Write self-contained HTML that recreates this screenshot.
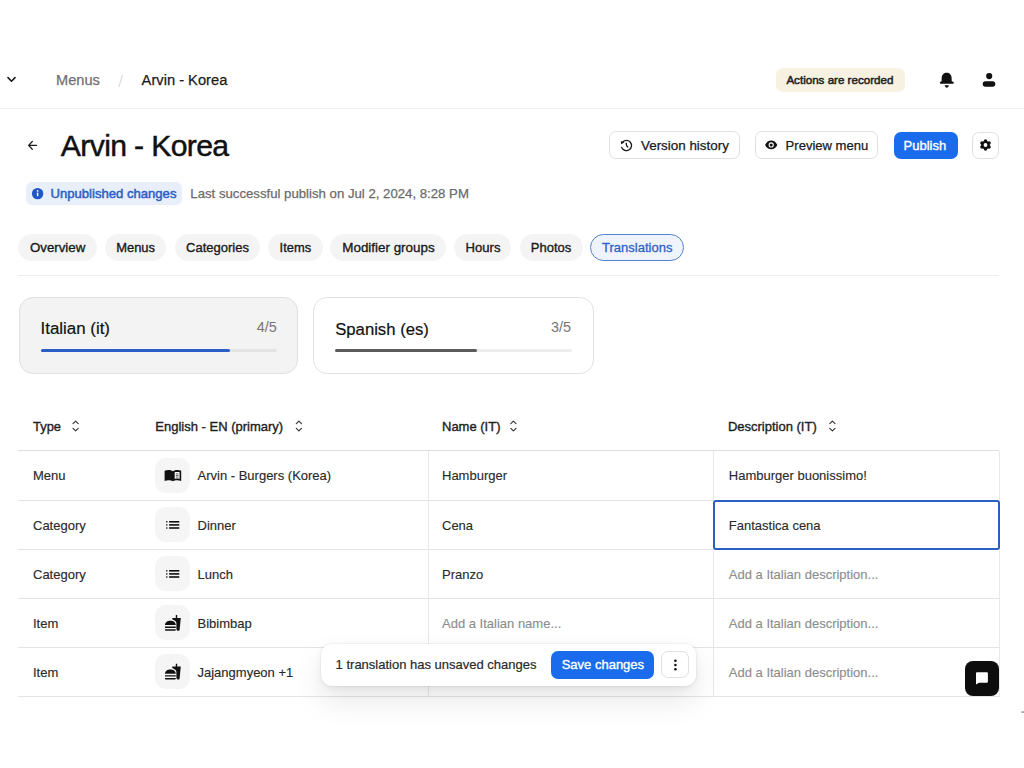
<!DOCTYPE html>
<html><head><meta charset="utf-8"><style>
html,body{margin:0;padding:0;background:#fff;width:1024px;height:768px;overflow:hidden;}
body{position:relative;font-family:"Liberation Sans",sans-serif;}
.t{position:absolute;white-space:nowrap;}
.r{position:absolute;}
</style></head><body>
<div class="t" style="left:56px;top:71px;font-size:14.6px;line-height:18px;color:#707070;font-weight:400;-webkit-text-stroke:0.25px #707070;">Menus</div>
<div class="t" style="left:141.6px;top:71px;font-size:14.7px;line-height:18px;color:#1a1a1a;font-weight:400;-webkit-text-stroke:0.25px #1a1a1a;">Arvin - Korea</div>
<div class="r" style="left:776px;top:67.5px;width:129.00px;height:24.50px;background:#f7f1e2;border-radius:7px;"></div>
<div class="t" style="left:786.4px;top:73px;font-size:11.6px;line-height:14px;color:#222;font-weight:400;-webkit-text-stroke:0.5px #222;">Actions are recorded</div>
<div class="r" style="left:0px;top:107.5px;width:1024.00px;height:1.50px;background:#efefef;"></div>
<div class="t" style="left:60.8px;top:128px;font-size:30.2px;line-height:36px;color:#111;font-weight:400;-webkit-text-stroke:0.45px #111;letter-spacing:-0.65px;">Arvin - Korea</div>
<div class="r" style="left:609px;top:131.4px;width:131.00px;height:27.80px;border:1px solid #dfdfdf;border-radius:7px;box-sizing:border-box;background:#fff;"></div>
<div class="t" style="left:641px;top:138px;font-size:13.4px;line-height:16px;color:#1a1a1a;font-weight:400;-webkit-text-stroke:0.25px #1a1a1a;">Version history</div>
<div class="r" style="left:754.5px;top:131.4px;width:123.70px;height:27.80px;border:1px solid #dfdfdf;border-radius:7px;box-sizing:border-box;background:#fff;"></div>
<div class="t" style="left:785.6px;top:138px;font-size:13.05px;line-height:16px;color:#1a1a1a;font-weight:400;-webkit-text-stroke:0.25px #1a1a1a;">Preview menu</div>
<div class="r" style="left:893.5px;top:132px;width:64.00px;height:27.00px;background:#1a6cec;border-radius:7px;"></div>
<div class="t" style="left:903.6px;top:138px;font-size:13.0px;line-height:16px;color:#fff;font-weight:400;-webkit-text-stroke:0.35px #fff;">Publish</div>
<div class="r" style="left:971.7px;top:132px;width:27.30px;height:27.00px;border:1px solid #dfdfdf;border-radius:7px;box-sizing:border-box;background:#fff;"></div>
<div class="r" style="left:25.6px;top:182px;width:156.90px;height:23.00px;background:#e8effb;border-radius:6px;"></div>
<div class="t" style="left:50.5px;top:186px;font-size:13.1px;line-height:16px;color:#2d5fc2;font-weight:400;-webkit-text-stroke:0.5px #2d5fc2;">Unpublished changes</div>
<div class="t" style="left:190.3px;top:186px;font-size:13.2px;line-height:16px;color:#6b6b6b;font-weight:400;-webkit-text-stroke:0.25px #6b6b6b;">Last successful publish on Jul 2, 2024, 8:28 PM</div>
<div class="r" style="left:18.3px;top:233.5px;width:78.70px;height:27.50px;background:#f4f4f4;border-radius:14px;"></div>
<div class="t" style="left:29.9px;top:240px;font-size:13.3px;line-height:16px;color:#1a1a1a;font-weight:400;-webkit-text-stroke:0.35px #1a1a1a;">Overview</div>
<div class="r" style="left:105.3px;top:233.5px;width:60.70px;height:27.50px;background:#f4f4f4;border-radius:14px;"></div>
<div class="t" style="left:116.2px;top:240px;font-size:12.95px;line-height:16px;color:#1a1a1a;font-weight:400;-webkit-text-stroke:0.35px #1a1a1a;">Menus</div>
<div class="r" style="left:175px;top:233.5px;width:84.70px;height:27.50px;background:#f4f4f4;border-radius:14px;"></div>
<div class="t" style="left:186px;top:240px;font-size:13.03px;line-height:16px;color:#1a1a1a;font-weight:400;-webkit-text-stroke:0.35px #1a1a1a;">Categories</div>
<div class="r" style="left:268.3px;top:233.5px;width:54.40px;height:27.50px;background:#f4f4f4;border-radius:14px;"></div>
<div class="t" style="left:279.6px;top:240px;font-size:12.9px;line-height:15px;color:#1a1a1a;font-weight:400;-webkit-text-stroke:0.35px #1a1a1a;">Items</div>
<div class="r" style="left:330.4px;top:233.5px;width:115.80px;height:27.50px;background:#f4f4f4;border-radius:14px;"></div>
<div class="t" style="left:342.3px;top:240px;font-size:13.4px;line-height:16px;color:#1a1a1a;font-weight:400;-webkit-text-stroke:0.35px #1a1a1a;">Modifier groups</div>
<div class="r" style="left:454.3px;top:233.5px;width:56.70px;height:27.50px;background:#f4f4f4;border-radius:14px;"></div>
<div class="t" style="left:465.5px;top:240px;font-size:13.1px;line-height:16px;color:#1a1a1a;font-weight:400;-webkit-text-stroke:0.35px #1a1a1a;">Hours</div>
<div class="r" style="left:519.6px;top:233.5px;width:63.10px;height:27.50px;background:#f4f4f4;border-radius:14px;"></div>
<div class="t" style="left:530.8px;top:240px;font-size:13.0px;line-height:16px;color:#1a1a1a;font-weight:400;-webkit-text-stroke:0.35px #1a1a1a;">Photos</div>
<div class="r" style="left:589.8px;top:233.5px;width:94.60px;height:27.50px;background:#eef3fc;border:1px solid #5281d3;border-radius:14px;box-sizing:border-box;"></div>
<div class="t" style="left:602px;top:240px;font-size:13.03px;line-height:16px;color:#2c63c6;font-weight:400;-webkit-text-stroke:0.3px #2c63c6;">Translations</div>
<div class="r" style="left:18px;top:274.8px;width:981.00px;height:1.50px;background:#eeeeee;"></div>
<div class="r" style="left:18.5px;top:297px;width:279.90px;height:77.20px;background:#f3f3f3;border:1px solid #e0e0e0;border-radius:14px;box-sizing:border-box;"></div>
<div class="t" style="left:40.5px;top:319px;font-size:16.9px;line-height:20px;color:#111;font-weight:400;-webkit-text-stroke:0.2px #111;">Italian (it)</div>
<div class="t" style="left:256.7px;top:319px;font-size:14.4px;line-height:17px;color:#767676;font-weight:400;">4/5</div>
<div class="r" style="left:40.5px;top:348.6px;width:236.50px;height:3.70px;background:#e3e3e3;border-radius:2px;"></div>
<div class="r" style="left:40.5px;top:348.6px;width:189.10px;height:3.70px;background:#2b5ec4;border-radius:2px;"></div>
<div class="r" style="left:313.2px;top:297px;width:280.40px;height:77.20px;background:#fff;border:1px solid #e2e2e2;border-radius:14px;box-sizing:border-box;"></div>
<div class="t" style="left:335.2px;top:320px;font-size:16.7px;line-height:20px;color:#111;font-weight:400;-webkit-text-stroke:0.2px #111;">Spanish (es)</div>
<div class="t" style="left:551px;top:319px;font-size:14.4px;line-height:17px;color:#767676;font-weight:400;">3/5</div>
<div class="r" style="left:335.2px;top:348.6px;width:236.40px;height:3.70px;background:#ededed;border-radius:2px;"></div>
<div class="r" style="left:335.2px;top:348.6px;width:141.80px;height:3.70px;background:#5c5c5c;border-radius:2px;"></div>
<div class="t" style="left:33.1px;top:419px;font-size:12.9px;line-height:15px;color:#1f1f1f;font-weight:400;-webkit-text-stroke:0.38px #1f1f1f;">Type</div>
<div class="t" style="left:155.3px;top:419px;font-size:13.0px;line-height:16px;color:#1f1f1f;font-weight:400;-webkit-text-stroke:0.38px #1f1f1f;">English - EN (primary)</div>
<div class="t" style="left:442px;top:419px;font-size:13.0px;line-height:16px;color:#1f1f1f;font-weight:400;-webkit-text-stroke:0.38px #1f1f1f;">Name (IT)</div>
<div class="t" style="left:727.9px;top:419px;font-size:13.0px;line-height:16px;color:#1f1f1f;font-weight:400;-webkit-text-stroke:0.38px #1f1f1f;">Description (IT)</div>
<div class="r" style="left:18px;top:450px;width:981.00px;height:1.00px;background:#dedede;"></div>
<div class="t" style="left:33.0px;top:468px;font-size:13.0px;line-height:16px;color:#2a2a2a;font-weight:400;-webkit-text-stroke:0.15px #2a2a2a;">Menu</div>
<div class="r" style="left:155.3px;top:457.8px;width:34.80px;height:35.00px;background:#f5f5f5;border-radius:11px;"></div>
<div class="t" style="left:197.5px;top:468px;font-size:13.0px;line-height:16px;color:#2a2a2a;font-weight:400;-webkit-text-stroke:0.15px #2a2a2a;">Arvin - Burgers (Korea)</div>
<div class="t" style="left:442px;top:468px;font-size:13.0px;line-height:16px;color:#2a2a2a;font-weight:400;-webkit-text-stroke:0.12px #2a2a2a;">Hamburger</div>
<div class="t" style="left:728.8px;top:468px;font-size:13.0px;line-height:16px;color:#2a2a2a;font-weight:400;-webkit-text-stroke:0.12px #2a2a2a;">Hamburger buonissimo!</div>
<div class="r" style="left:18px;top:499.9px;width:981.00px;height:1.00px;background:#e4e4e4;"></div>
<div class="t" style="left:33.0px;top:518px;font-size:13.0px;line-height:16px;color:#2a2a2a;font-weight:400;-webkit-text-stroke:0.15px #2a2a2a;">Category</div>
<div class="r" style="left:155.3px;top:507.2px;width:34.80px;height:35.00px;background:#f5f5f5;border-radius:11px;"></div>
<div class="t" style="left:197.5px;top:518px;font-size:13.0px;line-height:16px;color:#2a2a2a;font-weight:400;-webkit-text-stroke:0.15px #2a2a2a;">Dinner</div>
<div class="t" style="left:442px;top:518px;font-size:13.0px;line-height:16px;color:#2a2a2a;font-weight:400;-webkit-text-stroke:0.12px #2a2a2a;">Cena</div>
<div class="t" style="left:728.8px;top:518px;font-size:13.0px;line-height:16px;color:#2a2a2a;font-weight:400;-webkit-text-stroke:0.12px #2a2a2a;">Fantastica cena</div>
<div class="r" style="left:18px;top:548.9px;width:981.00px;height:1.00px;background:#e4e4e4;"></div>
<div class="t" style="left:33.0px;top:567px;font-size:13.0px;line-height:16px;color:#2a2a2a;font-weight:400;-webkit-text-stroke:0.15px #2a2a2a;">Category</div>
<div class="r" style="left:155.3px;top:556.1999999999999px;width:34.80px;height:35.00px;background:#f5f5f5;border-radius:11px;"></div>
<div class="t" style="left:197.5px;top:567px;font-size:13.0px;line-height:16px;color:#2a2a2a;font-weight:400;-webkit-text-stroke:0.15px #2a2a2a;">Lunch</div>
<div class="t" style="left:442px;top:567px;font-size:13.0px;line-height:16px;color:#2a2a2a;font-weight:400;-webkit-text-stroke:0.12px #2a2a2a;">Pranzo</div>
<div class="t" style="left:728.8px;top:567px;font-size:13.0px;line-height:16px;color:#8c8c8c;font-weight:400;-webkit-text-stroke:0.12px #8c8c8c;">Add a Italian description...</div>
<div class="r" style="left:18px;top:598.1px;width:981.00px;height:1.00px;background:#e4e4e4;"></div>
<div class="t" style="left:33.0px;top:616px;font-size:13.0px;line-height:16px;color:#2a2a2a;font-weight:400;-webkit-text-stroke:0.15px #2a2a2a;">Item</div>
<div class="r" style="left:155.3px;top:605.4px;width:34.80px;height:35.00px;background:#f5f5f5;border-radius:11px;"></div>
<div class="t" style="left:197.5px;top:616px;font-size:13.0px;line-height:16px;color:#2a2a2a;font-weight:400;-webkit-text-stroke:0.15px #2a2a2a;">Bibimbap</div>
<div class="t" style="left:442px;top:616px;font-size:13.0px;line-height:16px;color:#8c8c8c;font-weight:400;-webkit-text-stroke:0.12px #8c8c8c;">Add a Italian name...</div>
<div class="t" style="left:728.8px;top:616px;font-size:13.0px;line-height:16px;color:#8c8c8c;font-weight:400;-webkit-text-stroke:0.12px #8c8c8c;">Add a Italian description...</div>
<div class="r" style="left:18px;top:646.8px;width:981.00px;height:1.00px;background:#e4e4e4;"></div>
<div class="t" style="left:33.0px;top:665px;font-size:13.0px;line-height:16px;color:#2a2a2a;font-weight:400;-webkit-text-stroke:0.15px #2a2a2a;">Item</div>
<div class="r" style="left:155.3px;top:654.0999999999999px;width:34.80px;height:35.00px;background:#f5f5f5;border-radius:11px;"></div>
<div class="t" style="left:197.5px;top:665px;font-size:13.0px;line-height:16px;color:#2a2a2a;font-weight:400;-webkit-text-stroke:0.15px #2a2a2a;">Jajangmyeon +1</div>
<div class="t" style="left:442px;top:665px;font-size:13.0px;line-height:16px;color:#8c8c8c;font-weight:400;-webkit-text-stroke:0.12px #8c8c8c;">Add a Italian name...</div>
<div class="t" style="left:728.8px;top:665px;font-size:13.0px;line-height:16px;color:#8c8c8c;font-weight:400;-webkit-text-stroke:0.12px #8c8c8c;">Add a Italian description...</div>
<div class="r" style="left:18px;top:695.8px;width:981.00px;height:1.00px;background:#e4e4e4;"></div>
<div class="r" style="left:427.6px;top:451px;width:1.00px;height:245.80px;background:#e8e8e8;"></div>
<div class="r" style="left:712.6px;top:451px;width:1.00px;height:245.80px;background:#e8e8e8;"></div>
<div class="r" style="left:998.6px;top:451px;width:1.00px;height:245.80px;background:#e8e8e8;"></div>
<div class="r" style="left:712.6px;top:500.2px;width:287.00px;height:49.70px;border:2px solid #2b5fc2;border-radius:3px;box-sizing:border-box;"></div>
<svg class="r" style="left:0;top:0;pointer-events:none" width="1024" height="768" viewBox="0 0 1024 768"><path d="M8 77.6 L11.5 81.2 L15 77.6" fill="none" stroke="#1a1a1a" stroke-width="1.6" stroke-linecap="round" stroke-linejoin="round"/><path d="M122.5 75 L118.8 87" stroke="#d9d9d9" stroke-width="1.1"/><path fill="#111" d="M939.8 82.8 C939.8 82 940.6 81.6 941.6 81.2 L941.7 77.8 C941.7 74.8 944 72.7 946.7 72.7 C949.4 72.7 951.6 74.8 951.6 77.8 L951.7 81.2 C952.7 81.6 953.9 82 953.9 82.8 C953.9 83.3 953.5 83.7 953 83.7 H940.7 C940.2 83.7 939.8 83.3 939.8 82.8 Z"/><path fill="#111" d="M944.6 85.3 H948.9 C948.6 86.9 947.7 87.7 946.75 87.7 C945.8 87.7 944.9 86.9 944.6 85.3 Z"/><circle cx="989.2" cy="76.1" r="3.1" fill="#111"/><rect x="982.7" y="81.2" width="12.6" height="5.5" rx="2.6" fill="#111"/><path d="M36.6 145.4 H29 M32.3 141.5 L28.6 145.4 L32.3 149.3" fill="none" stroke="#1a1a1a" stroke-width="1.25" stroke-linecap="round" stroke-linejoin="round"/><g fill="none" stroke="#1a1a1a" stroke-width="1.3" stroke-linecap="round"><path d="M622.3 142.5 A5.1 5.1 0 1 1 621.7 147.4"/><path d="M626.2 143.1 L626.6 145.8 L627.8 147"/></g><path fill="#1a1a1a" d="M620.9 140.9 L624.4 142.5 L621.1 144.3 Z"/><path fill="#111" d="M765.1 144.9 C766.6 142 768.7 140.6 771.2 140.6 C773.7 140.6 775.8 142 777.3 144.9 C775.8 147.8 773.7 149.2 771.2 149.2 C768.7 149.2 766.6 147.8 765.1 144.9 Z"/><circle cx="771.2" cy="144.9" r="2.6" fill="#fff"/><circle cx="771.2" cy="144.9" r="1.5" fill="#111"/><circle cx="985.50" cy="140.90" r="1.75" fill="#111"/><circle cx="989.05" cy="142.95" r="1.75" fill="#111"/><circle cx="989.05" cy="147.05" r="1.75" fill="#111"/><circle cx="985.50" cy="149.10" r="1.75" fill="#111"/><circle cx="981.95" cy="147.05" r="1.75" fill="#111"/><circle cx="981.95" cy="142.95" r="1.75" fill="#111"/><circle cx="985.5" cy="145.0" r="4.3" fill="#111"/><circle cx="985.5" cy="145.0" r="1.9" fill="#fff"/><circle cx="37.6" cy="193.6" r="5.7" fill="#1f56c8"/><rect x="36.9" y="192.6" width="1.4" height="3.6" fill="#fff"/><circle cx="37.6" cy="190.9" r="0.85" fill="#fff"/><path d="M73.0 423.7 L75.6 421.2 L78.2 423.7 M73.0 428.3 L75.6 430.8 L78.2 428.3" fill="none" stroke="#333" stroke-width="1.15" stroke-linecap="round" stroke-linejoin="round"/><path d="M296.3 423.7 L298.9 421.2 L301.5 423.7 M296.3 428.3 L298.9 430.8 L301.5 428.3" fill="none" stroke="#333" stroke-width="1.15" stroke-linecap="round" stroke-linejoin="round"/><path d="M510.8 423.7 L513.4 421.2 L516.0 423.7 M510.8 428.3 L513.4 430.8 L516.0 428.3" fill="none" stroke="#333" stroke-width="1.15" stroke-linecap="round" stroke-linejoin="round"/><path d="M829.8 423.7 L832.4 421.2 L835.0 423.7 M829.8 428.3 L832.4 430.8 L835.0 428.3" fill="none" stroke="#333" stroke-width="1.15" stroke-linecap="round" stroke-linejoin="round"/><path fill="#111" d="M164.6 470.8 C167 469.7 170.8 469.8 172.9 471.2 C175 469.8 178.8 469.7 181.2 470.8 V480.9 C178.8 479.9 175 479.9 172.9 481.2 C170.8 479.9 167 479.9 164.6 480.9 Z"/><path fill="#fff" d="M174.7 472.3 C176 471.8 178.2 471.8 179.6 472.3 V478.9 C178.2 478.5 176 478.5 174.7 479.1 Z"/><path d="M175.8 473.9 H178.6 M175.8 475.5 H178.6 M175.8 477.1 H178.6" stroke="#555" stroke-width="0.9"/><rect x="166.1" y="521.15" width="1.35" height="1.35" fill="#111"/><rect x="169.1" y="521.00" width="10.2" height="1.6" fill="#111"/><rect x="166.1" y="524.25" width="1.35" height="1.35" fill="#111"/><rect x="169.1" y="524.10" width="10.2" height="1.6" fill="#111"/><rect x="166.1" y="527.35" width="1.35" height="1.35" fill="#111"/><rect x="169.1" y="527.20" width="10.2" height="1.6" fill="#111"/><rect x="166.1" y="570.15" width="1.35" height="1.35" fill="#111"/><rect x="169.1" y="570.00" width="10.2" height="1.6" fill="#111"/><rect x="166.1" y="573.25" width="1.35" height="1.35" fill="#111"/><rect x="169.1" y="573.10" width="10.2" height="1.6" fill="#111"/><rect x="166.1" y="576.35" width="1.35" height="1.35" fill="#111"/><rect x="169.1" y="576.20" width="10.2" height="1.6" fill="#111"/><g transform="translate(164.28 614.28) scale(0.718)"><path fill="#111" d="M18.06 22.99h1.66c.84 0 1.53-.64 1.63-1.46L23 5.05h-5V1h-1.97v4.05h-4.97l.3 2.34c1.71.47 3.31 1.32 4.27 2.26.72.71 1.22 1.5 1.22 2.79v8.55zM1 21.99V21h15.03v.99c0 .55-.45 1-1.01 1H2.01c-.56 0-1.01-.45-1.01-1zm15.03-7c0-8-15.03-8-15.03 0h15.03zM1.02 17h15v2h-15z"/></g><g transform="translate(164.28 662.98) scale(0.718)"><path fill="#111" d="M18.06 22.99h1.66c.84 0 1.53-.64 1.63-1.46L23 5.05h-5V1h-1.97v4.05h-4.97l.3 2.34c1.71.47 3.31 1.32 4.27 2.26.72.71 1.22 1.5 1.22 2.79v8.55zM1 21.99V21h15.03v.99c0 .55-.45 1-1.01 1H2.01c-.56 0-1.01-.45-1.01-1zm15.03-7c0-8-15.03-8-15.03 0h15.03zM1.02 17h15v2h-15z"/></g></svg>
<div class="r" style="left:321.3px;top:644.2px;width:374.30px;height:41.60px;background:#fff;border-radius:11px;box-shadow:0 14px 30px rgba(0,0,0,0.10),0 2px 6px rgba(0,0,0,0.06),0 0 0 1px rgba(0,0,0,0.03);"></div>
<div class="t" style="left:335.6px;top:657px;font-size:13.0px;line-height:16px;color:#2a2a2a;font-weight:400;-webkit-text-stroke:0.2px #2a2a2a;">1 translation has unsaved changes</div>
<div class="r" style="left:551px;top:651px;width:103.20px;height:27.70px;background:#1a6cec;border-radius:7px;"></div>
<div class="t" style="left:561.7px;top:657px;font-size:13.0px;line-height:16px;color:#fff;font-weight:400;-webkit-text-stroke:0.35px #fff;">Save changes</div>
<div class="r" style="left:661.4px;top:651.4px;width:28.00px;height:27.10px;border:1px solid #dfdfdf;border-radius:7px;box-sizing:border-box;background:#fff;"></div>
<div class="r" style="left:964.6px;top:661.4px;width:34.60px;height:34.20px;background:#0d0d0d;border-radius:8px;"></div>
<svg class="r" style="left:0;top:0;pointer-events:none" width="1024" height="768" viewBox="0 0 1024 768"><circle cx="675.4" cy="660.8" r="1.3" fill="#111"/><circle cx="675.4" cy="665" r="1.3" fill="#111"/><circle cx="675.4" cy="669.2" r="1.3" fill="#111"/><path fill="#fff" d="M976 673.2 C976 672.7 976.4 672.3 976.9 672.3 H987 C987.5 672.3 987.9 672.7 987.9 673.2 V681.8 C987.9 682.3 987.5 682.7 987 682.7 H979 L976 684.6 Z"/><rect x="1021.5" y="711.3" width="2.5" height="1.6" fill="#999"/></svg>
</body></html>
